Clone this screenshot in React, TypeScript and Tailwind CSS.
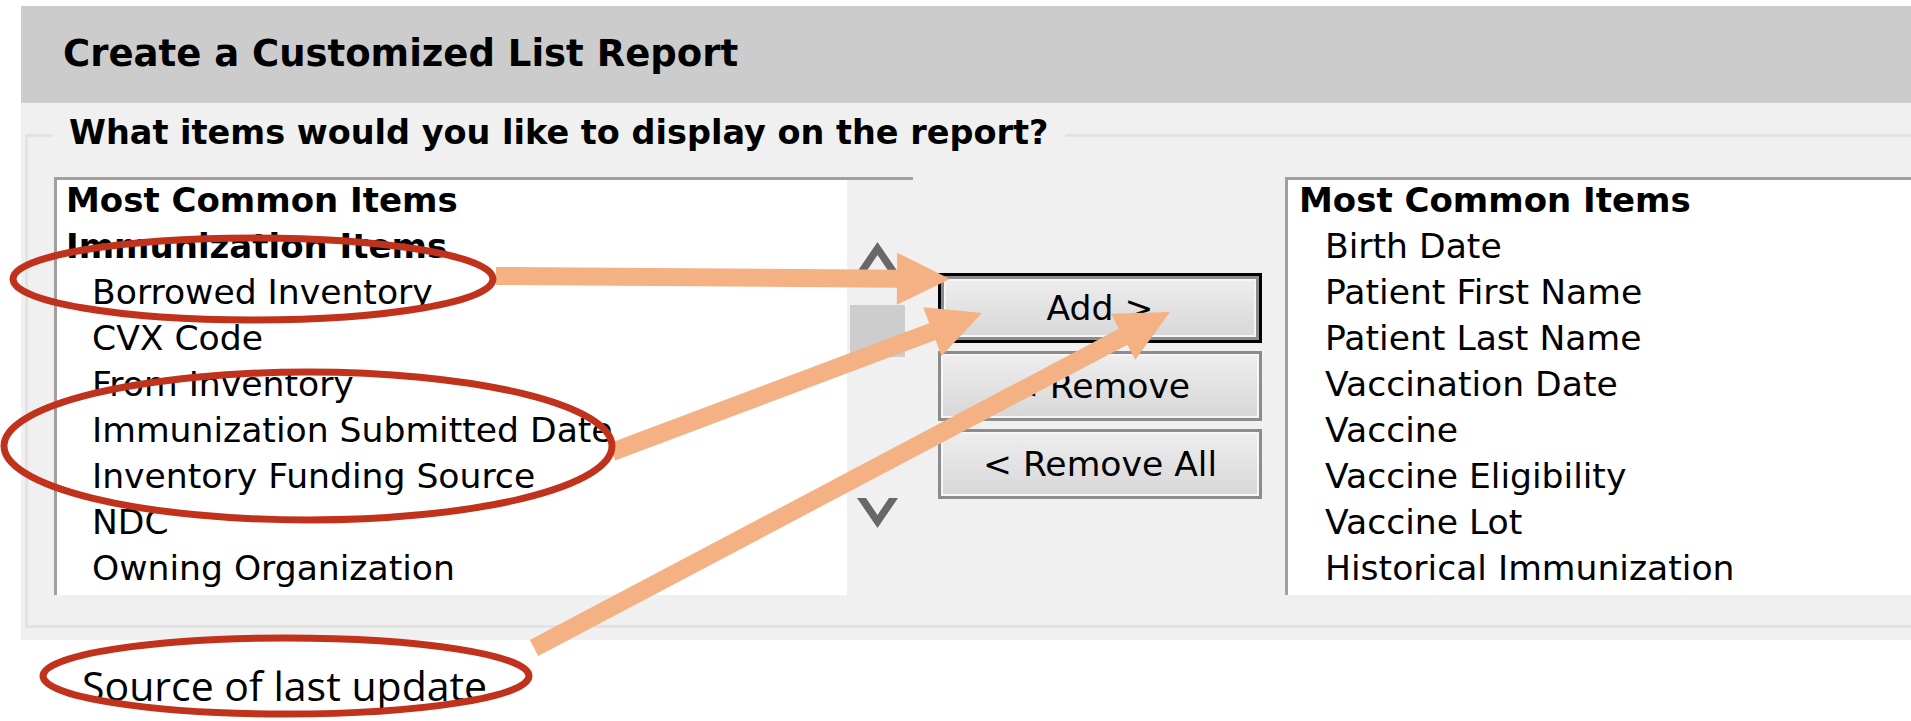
import type { ReactNode } from 'react'

const LEFT_ROWS: { label: string; group?: boolean }[] = [
  { label: 'Most Common Items', group: true },
  { label: 'Immunization Items', group: true },
  { label: 'Borrowed Inventory' },
  { label: 'CVX Code' },
  { label: 'From Inventory' },
  { label: 'Immunization Submitted Date' },
  { label: 'Inventory Funding Source' },
  { label: 'NDC' },
  { label: 'Owning Organization' },
]

const RIGHT_ROWS: { label: string; group?: boolean }[] = [
  { label: 'Most Common Items', group: true },
  { label: 'Birth Date' },
  { label: 'Patient First Name' },
  { label: 'Patient Last Name' },
  { label: 'Vaccination Date' },
  { label: 'Vaccine' },
  { label: 'Vaccine Eligibility' },
  { label: 'Vaccine Lot' },
  { label: 'Historical Immunization' },
]

// callout arrows: start point, tip point
const ARROWS: [number, number, number, number][] = [
  [496, 276, 950, 279],
  [612, 452, 982, 313],
  [534, 648, 1170, 312],
]

const RINGS = [
  { cx: 253, cy: 279, rx: 240, ry: 41 },
  { cx: 308, cy: 446, rx: 304, ry: 74 },
  { cx: 286, cy: 676, rx: 243, ry: 38 },
]

function arrowPoints(sx: number, sy: number, tx: number, ty: number) {
  const shaft = 18, head = 53, half = 26
  const dx = tx - sx, dy = ty - sy
  const len = Math.hypot(dx, dy)
  const ux = dx / len, uy = dy / len
  const nx = -uy, ny = ux
  const bx = tx - ux * head, by = ty - uy * head
  const pts = [
    [sx + nx * shaft / 2, sy + ny * shaft / 2],
    [bx + nx * shaft / 2, by + ny * shaft / 2],
    [bx + nx * half, by + ny * half],
    [tx, ty],
    [bx - nx * half, by - ny * half],
    [bx - nx * shaft / 2, by - ny * shaft / 2],
    [sx - nx * shaft / 2, sy - ny * shaft / 2],
  ]
  return pts.map((p) => p.join(',')).join(' ')
}

function ListRows({ rows, pad }: { rows: typeof LEFT_ROWS; pad: string }) {
  return (
    <div className={`flex flex-col ${pad}`}>
      {rows.map((r) => (
        <div
          key={r.label}
          className={[
            'h-[46px] leading-[41px] whitespace-nowrap text-black',
            r.group ? 'text-[34px] font-bold' : 'pl-[26px] text-[34.6px]',
          ].join(' ')}
        >
          {r.label}
        </div>
      ))}
    </div>
  )
}

function Chevron({ down }: { down?: boolean }) {
  return (
    <svg width="55" height="31" viewBox="0 0 55 31" className={down ? 'rotate-180' : ''}>
      <polygon points="7,30 27.5,0 48,30 39,30 27.5,13 16,30" fill="#686868" />
    </svg>
  )
}

function FormButton({ children, primary }: { children: ReactNode; primary?: boolean }) {
  return (
    <button
      className={[
        'h-[70px] w-full border-[3px] p-0',
        primary ? 'border-black' : 'border-[#8c8c8c]',
      ].join(' ')}
    >
      <span
        className={[
          'flex h-full w-full items-center justify-center bg-gradient-to-b from-[#eeeeee] to-[#d7d7d7]',
          'text-[34.6px] leading-[40px] text-black shadow-[inset_0_0_0_2px_#f6f6f6]',
          primary ? 'border-[3px] border-[#8c8c8c]' : '',
        ].join(' ')}
      >
        {children}
      </span>
    </button>
  )
}

export default function App() {
  return (
    <div className="relative h-[721px] w-[1911px] overflow-hidden bg-white font-['DejaVu_Sans',sans-serif]">
      <div className="pt-[6px]">
        <div className="ml-[21px] h-[97px] w-[1940px] bg-[#cccccc] pl-[42px] pt-[26px]">
          <h1 className="text-[37px] font-bold leading-[43px] text-black whitespace-nowrap">
            Create a Customized List Report
          </h1>
        </div>

        <div className="ml-[21px] w-[1940px] bg-[#f0f0f0] pt-[10px] pb-[12px]">
          <fieldset className="ml-[4px] border-[3px] border-[#e3e3e3] pt-[19px] pb-[30px]">
            <legend className="ml-[24px] px-[17px] pb-[5px] text-[33.5px] font-bold leading-[40px] text-black whitespace-nowrap">
              What items would you like to display on the report?
            </legend>

            <div className="flex items-start">
              {/* available items */}
              <div className="ml-[26px] flex h-[418px] w-[859px] border-t-[3px] border-l-[3px] border-[#a0a0a0]">
                <div className="w-[790px] bg-white">
                  <ListRows rows={LEFT_ROWS} pad="pl-[9px]" />
                </div>
                <div className="flex w-[66px] flex-col items-start pl-[3px] pt-[62px]">
                  <Chevron />
                  <div className="mt-[32px] h-[52px] w-[55px] bg-[#cdcdcd]" />
                  <div className="mt-[140px]">
                    <Chevron down />
                  </div>
                </div>
              </div>

              <div className="ml-[25px] mt-[96px] flex w-[324px] flex-col gap-[8px]">
                <FormButton primary>Add &gt;</FormButton>
                <FormButton>&lt; Remove</FormButton>
                <FormButton>&lt; Remove All</FormButton>
              </div>

              {/* selected items */}
              <div className="ml-[23px] h-[418px] w-[700px] border-t-[3px] border-l-[3px] border-[#a0a0a0] bg-white">
                <ListRows rows={RIGHT_ROWS} pad="pl-[11px]" />
              </div>
            </div>
          </fieldset>
        </div>

        <p className="ml-[82px] mt-[25px] text-[41px] leading-[41px] text-black whitespace-nowrap font-['Open_Sans',sans-serif]">
          Source of last update
        </p>
      </div>

      <svg
        className="pointer-events-none absolute inset-0"
        width="1911"
        height="721"
        viewBox="0 0 1911 721"
      >
        {ARROWS.map(([sx, sy, tx, ty], i) => (
          <polygon key={i} points={arrowPoints(sx, sy, tx, ty)} fill="#f4b183" />
        ))}
        {RINGS.map((r, i) => (
          <ellipse key={i} {...r} fill="none" stroke="#c0321c" strokeWidth="7" />
        ))}
      </svg>
    </div>
  )
}
